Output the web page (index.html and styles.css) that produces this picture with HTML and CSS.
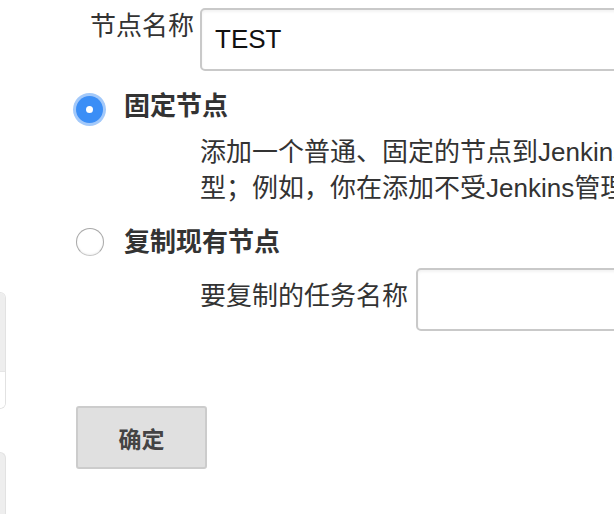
FILE: index.html
```html
<!DOCTYPE html>
<html lang="zh-CN">
<head>
<meta charset="utf-8">
<title>新建节点</title>
<link rel="stylesheet" href="styles.css">
</head>
<body>
<div class="page">
  <aside class="side">
    <div class="side-box">
      <div class="side-top"></div>
      <div class="side-bottom"></div>
    </div>
    <div class="side-box side-box2"></div>
  </aside>
  <main class="main">
    <div class="name-row">
      <label class="name-label" for="name">节点名称</label>
      <input class="text-input" id="name" type="text" value="TEST">
    </div>
    <div class="radio-row radio-row1">
      <span class="radio radio-on"></span>
      <span class="radio-label">固定节点</span>
    </div>
    <div class="desc">
      <div class="desc-line">添加一个普通、固定的节点到Jenkins。之所以叫“固定”是因为它不提供更高级别集成的代理类</div>
      <div class="desc-line">型；例如，你在添加不受Jenkins管理的物理计算机、虚拟机等。</div>
    </div>
    <div class="radio-row radio-row2">
      <span class="radio radio-off"></span>
      <span class="radio-label">复制现有节点</span>
    </div>
    <div class="copy-row">
      <label class="copy-label" for="copy">要复制的任务名称</label>
      <input class="text-input" id="copy" type="text" value="">
    </div>
    <button class="ok-btn" type="button">确定</button>
  </main>
</div>
</body>
</html>
```
FILE: styles.css
```css
html, body {
  margin: 0;
  padding: 0;
  background: #ffffff;
}
body {
  width: 614px;
  height: 514px;
  overflow: hidden;
  font-family: "Liberation Sans", "Noto Sans CJK SC", sans-serif;
  color: #333333;
}
.page {
  display: grid;
  grid-template-columns: 6px 1fr;
  height: 514px;
}
.side {
  padding-top: 292px;
}
.side-box {
  width: 5px;
  border: 1px solid #e2e2e2;
  border-left: none;
  border-radius: 0 6px 6px 0;
  overflow: hidden;
}
.side-top {
  height: 78px;
  background: #eeeeee;
  border-bottom: 1px solid #e6e6e6;
}
.side-bottom {
  height: 36px;
  background: #ffffff;
}
.side-box2 {
  margin-top: 43px;
  height: 80px;
  background: #eeeeee;
  border-bottom: none;
  border-radius: 0 6px 0 0;
}
.main {
  padding-top: 8px;
  overflow: hidden;
  min-width: 0;
}
.name-row {
  display: flex;
  align-items: flex-start;
}
.name-label {
  width: 188px;
  text-align: right;
  font-size: 26px;
  line-height: 36px;
  flex: none;
}
.text-input {
  flex: none;
  box-sizing: border-box;
  width: 600px;
  height: 63px;
  margin: 0 0 0 6px;
  padding: 0 13px;
  border: 2px solid #c9c9c9;
  border-radius: 5px;
  box-shadow: inset 0 2px 3px rgba(0, 0, 0, 0.05);
  background: #ffffff;
  font-family: "Liberation Sans", "Noto Sans CJK SC", sans-serif;
  font-size: 26px;
  color: #111111;
  outline: none;
}
.radio-row {
  display: flex;
  align-items: flex-start;
  margin-left: 70px;
}
.radio-row1 {
  margin-top: 17px;
}
.radio-row2 {
  margin-top: 18px;
  align-items: center;
}
.radio {
  flex: none;
  position: relative;
  box-sizing: border-box;
  border-radius: 50%;
}
.radio-on {
  width: 27px;
  height: 27px;
  margin-top: 8px;
  background: #3b8ef6;
  box-shadow: 0 0 0 3px #a3c9fa;
}
.radio-on::after {
  content: "";
  position: absolute;
  left: 10px;
  top: 10px;
  width: 7px;
  height: 7px;
  border-radius: 50%;
  background: #ffffff;
}
.radio-off {
  width: 28px;
  height: 28px;
  border: 1.5px solid #a9a9a9;
  border-bottom-color: #c6c6c6;
  background: #ffffff;
  box-shadow: inset 0 -1px 2px rgba(0, 0, 0, 0.06);
}
.radio-label {
  margin-left: 21px;
  font-size: 26px;
  line-height: 36px;
  font-weight: bold;
  color: #333333;
}
.radio-row2 .radio-label {
  margin-left: 20px;
}
.desc {
  margin: 10px 0 0 194px;
  font-size: 26px;
  line-height: 36px;
  color: #333333;
}
.desc-line {
  white-space: nowrap;
}
.copy-row {
  display: flex;
  align-items: flex-start;
  margin: 8px 0 0 194px;
}
.copy-label {
  flex: none;
  font-size: 26px;
  line-height: 36px;
  padding-top: 10px;
}
.copy-row .text-input {
  margin-left: 8px;
}
.ok-btn {
  display: block;
  box-sizing: border-box;
  width: 131px;
  height: 63px;
  margin: 75px 0 0 70px;
  padding: 0;
  border: 2px solid #cccccc;
  border-radius: 3px;
  background: #e0e0e0;
  font-family: "Liberation Sans", "Noto Sans CJK SC", sans-serif;
  font-size: 23px;
  font-weight: bold;
  color: #444444;
}
```
